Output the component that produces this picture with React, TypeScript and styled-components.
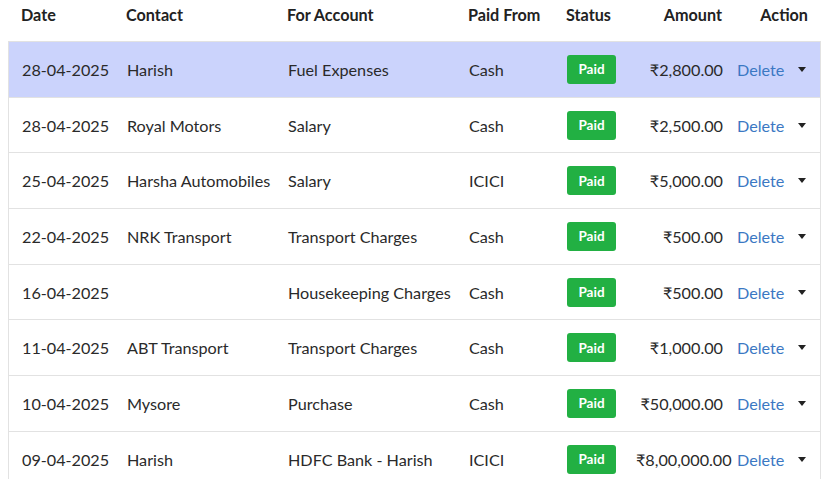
import React from "react";
import styled, { createGlobalStyle } from "styled-components";

const Global = createGlobalStyle`
  body { margin: 0; font-family: Lato, "Open Sans", sans-serif; color: #222; background: #fff; }
`;

const cols = "105px 161px 181px 98px 69px 108px 91px";

const Table = styled.div`
  margin-left: 8px;
  width: 813px;
`;

const Head = styled.div`
  display: grid;
  grid-template-columns: ${cols};
  height: 41px;
  align-items: start;
  padding-top: 5px;
  box-sizing: border-box;
  font-weight: 700;
  font-size: 16.2px;
  color: #222;
`;

const Row = styled.div<{ $hl?: boolean }>`
  display: grid;
  grid-template-columns: ${cols};
  height: 55.7px;
  align-items: center;
  box-sizing: border-box;
  border: 1px solid #e2e2e2;
  border-bottom: none;
  background: ${(p) => (p.$hl ? "#cbd3fc" : "#fff")};
  font-size: 16.2px;
  color: #2a2a2a;
`;

const Cell = styled.div<{ $right?: boolean; $pr?: number }>`
  padding: 0 ${(p) => (p.$right ? `${p.$pr ?? 8}px` : "0")} 0 13px;
  text-align: ${(p) => (p.$right ? "right" : "left")};
  white-space: nowrap;
`;

const Badge = styled.span`
  display: inline-flex;
  align-items: center;
  justify-content: center;
  width: 49px;
  height: 29px;
  background: #22b043;
  color: #fff;
  font-weight: 700;
  font-size: 13.5px;
  border-radius: 3px;
`;

const ActionCell = styled.div`
  display: flex;
  align-items: center;
  padding-left: 6px;
  gap: 14px;
`;

const Del = styled.span`
  color: #3b78c3;
`;

const Caret = styled.span`
  width: 0;
  height: 0;
  border-left: 4.5px solid transparent;
  border-right: 4.5px solid transparent;
  border-top: 5px solid #222;
`;

const data = [
  ["28-04-2025", "Harish", "Fuel Expenses", "Cash", "₹2,800.00"],
  ["28-04-2025", "Royal Motors", "Salary", "Cash", "₹2,500.00"],
  ["25-04-2025", "Harsha Automobiles", "Salary", "ICICI", "₹5,000.00"],
  ["22-04-2025", "NRK Transport", "Transport Charges", "Cash", "₹500.00"],
  ["16-04-2025", "", "Housekeeping Charges", "Cash", "₹500.00"],
  ["11-04-2025", "ABT Transport", "Transport Charges", "Cash", "₹1,000.00"],
  ["10-04-2025", "Mysore", "Purchase", "Cash", "₹50,000.00"],
  ["09-04-2025", "Harish", "HDFC Bank - Harish", "ICICI", "₹8,00,000.00"],
];

export default function App() {
  return (
    <>
      <Global />
      <Table>
        <Head>
          <Cell>Date</Cell>
          <Cell>Contact</Cell>
          <Cell>For Account</Cell>
          <Cell>Paid From</Cell>
          <Cell>Status</Cell>
          <Cell $right $pr={8}>Amount</Cell>
          <Cell $right $pr={13}>Action</Cell>
        </Head>
        {data.map((r, i) => (
          <Row key={i} $hl={i === 0}>
            <Cell>{r[0]}</Cell>
            <Cell>{r[1]}</Cell>
            <Cell>{r[2]}</Cell>
            <Cell>{r[3]}</Cell>
            <Cell>
              <Badge>Paid</Badge>
            </Cell>
            <Cell $right $pr={8}>{r[4]}</Cell>
            <ActionCell>
              <Del>Delete</Del>
              <Caret />
            </ActionCell>
          </Row>
        ))}
      </Table>
    </>
  );
}
